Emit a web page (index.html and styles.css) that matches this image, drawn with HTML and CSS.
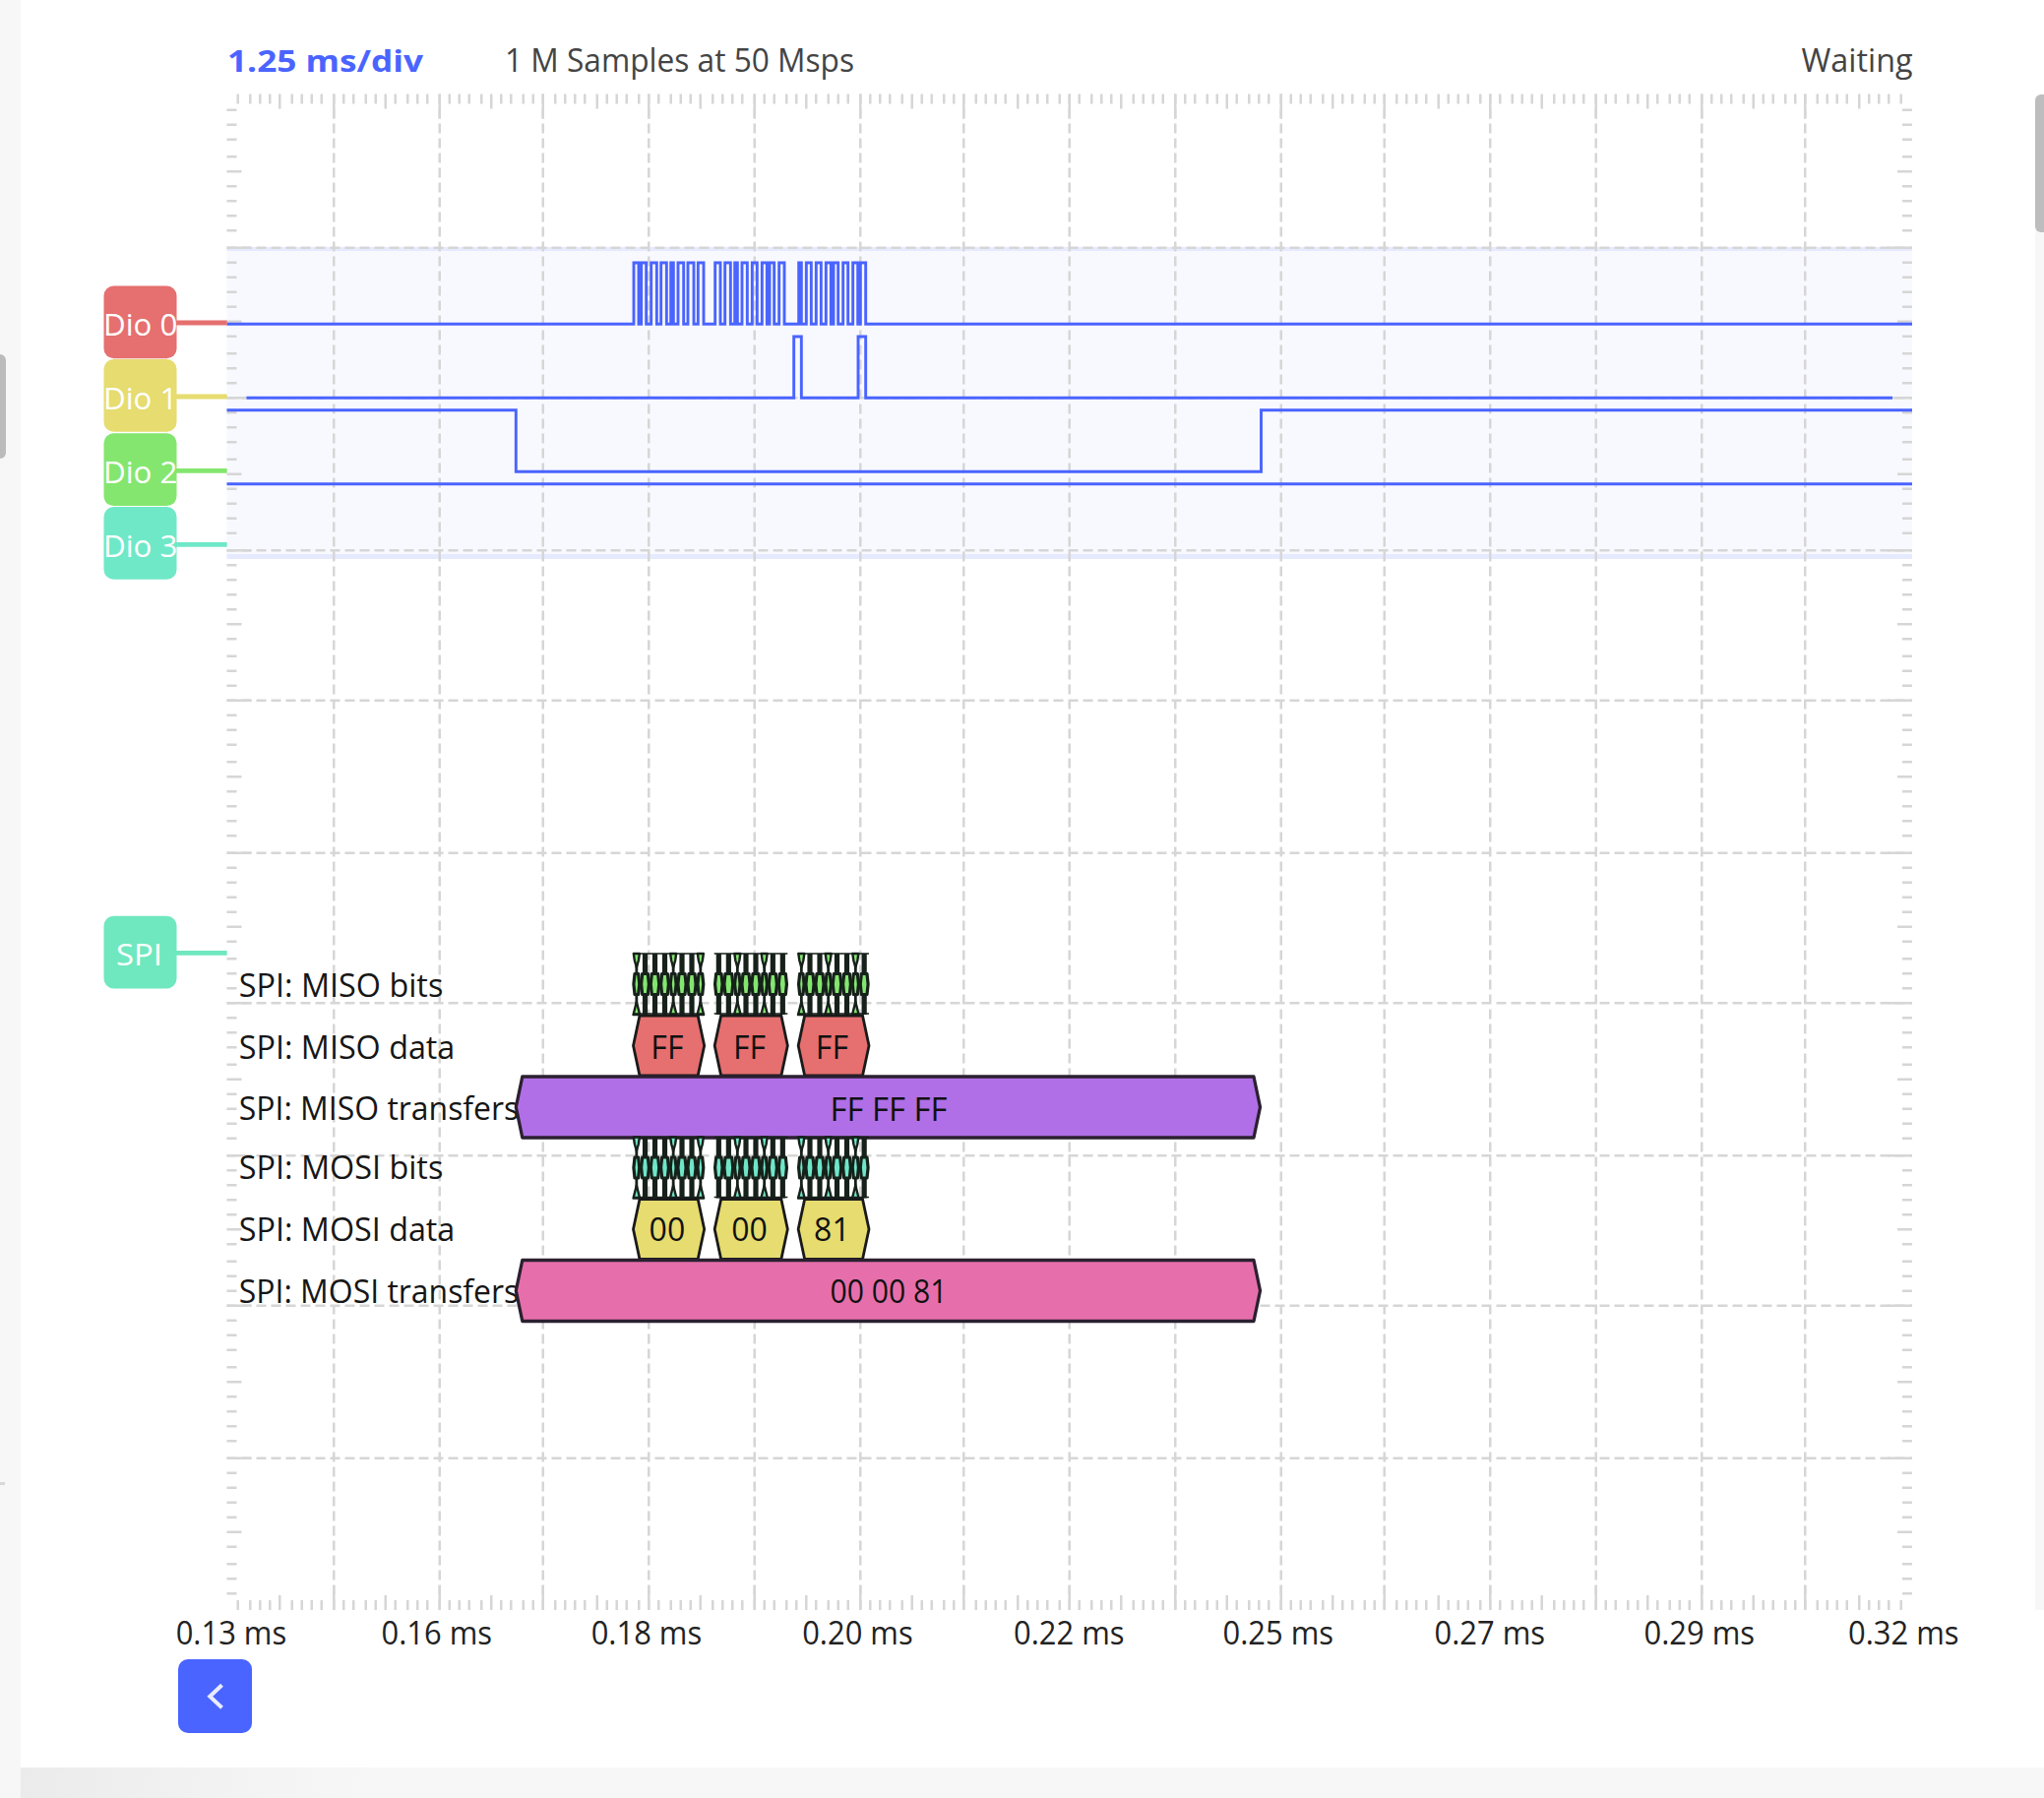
FILE: index.html
```html
<!DOCTYPE html>
<html lang="en">
<head>
<meta charset="utf-8">
<title>Logic Analyzer</title>
<link rel="stylesheet" href="styles.css">
</head>
<body>
<div class="app">
  <aside class="gutter"><div class="gutter-thumb"></div><div class="gutter-mark"></div></aside>
  <main class="panel">
    <svg class="scope" viewBox="21 0 2047 1796" role="img" aria-label="Logic analyzer plot">
      <g class="header">
        <text class="timebase" x="231" y="73" textLength="199" lengthAdjust="spacingAndGlyphs">1.25 ms/div</text>
        <text class="info" x="513" y="73" textLength="355" lengthAdjust="spacingAndGlyphs">1 M Samples at 50 Msps</text>
        <text class="info" x="1830.5" y="73" textLength="113" lengthAdjust="spacingAndGlyphs">Waiting</text>
      </g>
      <g class="band">
        <rect class="band-fill" x="230.5" y="252" width="1712.5" height="314"/>
        <rect class="band-edge" x="230.5" y="251" width="1712.5" height="4"/>
        <rect class="band-edge" x="230.5" y="563" width="1712.5" height="5"/>
      </g>
      <path id="grid-dashes" class="grid dashed"/>
      <path id="grid-ticks" class="grid"/>
      <g id="traces" class="traces"></g>
      <g id="channels"></g>
      <g id="decoder"></g>
      <g id="axis" class="axis"></g>
    </svg>
    <button class="prev" aria-label="Previous"><svg viewBox="0 0 76 76"><path d="M44.8 26.5 32.5 38l12.3 11.5"/></svg></button>
  </main>
  <aside class="scrollbar"><div class="track"><div class="thumb"></div></div></aside>
  <footer class="footer"></footer>
</div>
<script src="scope.js"></script>
</body>
</html>
```
FILE: styles.css
```css
* { box-sizing: border-box; }
body {
  margin: 0;
  background: #fff;
  font-family: "Open Sans", "Noto Sans", sans-serif;
}
.app {
  display: grid;
  grid-template-columns: 21px 1fr 9px;
  grid-template-rows: 1796px 31px;
  width: 2077px;
  height: 1827px;
  overflow: hidden;
}
.gutter {
  grid-row: 1 / 3;
  padding-top: 360px;
  background: #f7f7f7;
}
.gutter-thumb {
  width: 5.5px;
  height: 106px;
  border-radius: 0 6px 6px 0;
  background: #bbb;
}
.gutter-mark {
  width: 5px;
  height: 3px;
  margin-top: 1039.5px;
  background: #d8d8d8;
}
.panel { position: relative; }
.scope {
  display: block;
  width: 2047px;
  height: 1796px;
}
.scope text { font-size: 32px; }
.scope .timebase { font-weight: 700; font-size: 30.5px; fill: #4a64ff; }
.info { fill: #444; }
.band-fill { fill: #f8f9ff; }
.band-edge { fill: #e6eaff; }
.grid { fill: none; stroke: #d6d6d6; stroke-width: 2.5; }
.dashed { stroke-dasharray: 10 5; }
.traces path { fill: none; stroke: #4a64ff; stroke-width: 2.9; }
.link { stroke-width: 4.8; }
.scope .badge-text { fill: #fff; font-size: 31px; }
.cell { stroke: #1a1a1a; stroke-width: 2.8; }
.bit { stroke: #16211a; stroke-width: 3.2; stroke-linejoin: round; }
.notch { stroke: #16211a; stroke-width: 2.4; stroke-linejoin: round; }
.stem { stroke: #16211a; }
.transfer { stroke: #2b2030; stroke-width: 3.3; stroke-linejoin: round; }
.axis text { fill: #222; }
.label { fill: #161616; }
.value { fill: #111; text-anchor: middle; }
.prev {
  position: absolute;
  left: 159.5px;
  top: 1685.5px;
  width: 75.5px;
  height: 75.5px;
  padding: 0;
  border: 0;
  border-radius: 10px;
  background: #4a64ff;
}
.prev svg { display: block; width: 100%; height: 100%; }
.prev path { fill: none; stroke: #e9ecff; stroke-width: 4; }
.scrollbar { padding-top: 95.5px; }
.track { height: 1540.5px; background: #f7f7f7; border-radius: 6px 0 0 0; }
.thumb { height: 140px; border-radius: 6px 0 0 6px; background: #bdbdbf; }
.footer {
  grid-column: 2 / 4;
  background: linear-gradient(90deg, #ebebeb 0, #f3f3f3 220px, #f7f7f7 360px);
}
```
FILE: scope.js
```js
const NS = "http://www.w3.org/2000/svg";
const LEFT = 230.5, RIGHT = 1943, TOP = 95.5, BOTTOM = 1636;

function add(parentId, tag, attrs, text) {
  const el = document.createElementNS(NS, tag);
  for (const k in attrs) el.setAttribute(k, attrs[k]);
  if (text !== undefined) el.textContent = text;
  document.getElementById(parentId).appendChild(el);
  return el;
}

/* Graticule: 16 x 10 divisions with ten ticks in each */
let ticks = "", dashes = "";
for (let n = 1; n < 160; n++) {
  const x = 231.75 + 2.5 * Math.round(4.275 * n + 1e-6);
  const len = n % 10 === 0 ? 25 : n % 5 === 0 ? 15 : 10;
  ticks += `M${x} ${TOP}v${len}M${x} ${BOTTOM}v${-len}`;
  if (n % 10 === 0) dashes += `M${x} ${TOP}V${BOTTOM}`;
}
for (let n = 1; n < 100; n++) {
  const y = 96.75 + 2.5 * Math.round(6.15 * n + 1e-6);
  const len = n % 10 === 0 ? 25 : n % 5 === 0 ? 15 : 10;
  ticks += `M${LEFT} ${y}h${len}M${RIGHT} ${y}h${-len}`;
  if (n % 10 === 0) dashes += `M${LEFT} ${y}H${RIGHT}`;
}
document.getElementById("grid-ticks").setAttribute("d", ticks);
document.getElementById("grid-dashes").setAttribute("d", dashes);

/* Digital traces; pulse edges are in thirds of a pixel from x = 620 */
const px = v => +(620 + v / 3).toFixed(2);
function pulses(x0, x1, low, high, list) {
  let d = `M${x0} ${low}`;
  for (const [a, b] of list) d += `H${px(a)}V${high}H${px(b)}V${low}`;
  return d + `H${x1}`;
}
const clock = [
  [72, 87], [95, 110], [125, 142], [155, 172], [185, 193], [207, 224], [237, 255], [268, 285],
  [320, 336], [350, 367], [380, 388], [402, 418], [433, 448], [463, 478], [486, 500], [515, 531],
  [575, 583], [598, 613], [628, 643], [658, 673], [681, 695], [710, 725], [740, 755], [763, 779]
];
add("traces", "path", { d: pulses(LEFT, RIGHT, 329.3, 267, clock) });
add("traces", "path", { d: pulses(250.5, 1923, 404.3, 342, [[560, 583], [756, 779]]) });
add("traces", "path", { d: `M${LEFT} 416.8H524.3V479.3H1281.5V416.8H${RIGHT}` });
add("traces", "path", { d: `M${LEFT} 491.8H${RIGHT}` });

/* Channel badges */
[
  ["Dio 0", 290.5, 328, 340.7, "#e66f6f"],
  ["Dio 1", 365, 403, 415.7, "#e6dc6f"],
  ["Dio 2", 440.3, 478.3, 490.7, "#84e66f"],
  ["Dio 3", 515, 553.3, 565.7, "#6fe8c8"],
  ["SPI", 930.7, 968.3, 980.5, "#6fe8bf"]
].forEach(([name, y, ly, ty, color]) => {
  const dio = name !== "SPI";
  add("channels", "rect", { x: 105.5, y, width: 74, height: 73.8, rx: 10, fill: color });
  add("channels", "text", {
    class: "badge-text", x: dio ? 105 : 118, y: ty,
    textLength: dio ? 75.5 : 47, lengthAdjust: "spacingAndGlyphs"
  }, name);
  add("channels", "path", { class: "link", d: `M179 ${ly}H230.7`, stroke: color });
});

/* Decoder rows */
function hex(x0, x1, y0, y1, fill, cls) {
  const m = (y0 + y1) / 2, s = 6.5;
  add("decoder", "path", {
    class: cls, fill,
    d: `M${x0} ${m}L${x0 + s} ${y0}L${x1 - s} ${y0}L${x1} ${m}L${x1 - s} ${y1}L${x0 + s} ${y1}Z`
  });
}
/* One-bit cells are narrower than their own slants, so they pinch to a stem above and below */
function bitCell(x0, x1, y, fill) {
  const c = (x0 + x1) / 2, narrow = x1 - x0 < 8.5, bottom = y + 62;
  add("decoder", "path", { class: "stem", d: `M${c} ${y}V${bottom}`, "stroke-width": narrow ? 2.8 : 5.2 });
  if (narrow) {
    add("decoder", "path", {
      class: "notch", fill,
      d: `M${c - 3} ${y}H${c + 3}L${c + 2} ${y + 7}L${c} ${y + 14}L${c - 2} ${y + 7}Z` +
         `M${c - 3.3} ${bottom}H${c + 3.3}L${c} ${bottom - 13}Z`
    });
  }
  const m = y + 31, a = x0 + 0.9, b = x1 - 0.9;
  add("decoder", "path", {
    class: "bit", fill,
    d: `M${a} ${m}L${a + 1.1} ${m - 10.5}H${b - 1.1}L${b} ${m}L${b - 1.1} ${m + 10.5}H${a + 1.1}Z`
  });
}
const bytes = [
  [69, 92, 121, 152, 181, 204, 234, 264, 287],
  [317, 345, 377, 399, 429, 459, 481, 511, 541],
  [572, 594, 624, 654, 676, 707, 736, 760, 789]
];
[
  ["SPI: MISO bits", 1013.4, 207.5], ["SPI: MISO data", 1076.2, 219.5], ["SPI: MISO transfers", 1138.4, 284.5],
  ["SPI: MOSI bits", 1198.4, 207.5], ["SPI: MOSI data", 1261.2, 219.5], ["SPI: MOSI transfers", 1323.6, 284.5]
].forEach(([t, y, w]) => add("decoder", "text", {
  class: "label", x: 242.8, y, textLength: w, lengthAdjust: "spacingAndGlyphs"
}, t));
[
  { top: 969, bit: "#84e66f", data: "#e66f6f", xfer: "#b06fe6", vals: ["FF", "FF", "FF"], dy: 1076.2, ty: 1138.7 },
  { top: 1155.5, bit: "#6fe6c8", data: "#e6dc6f", xfer: "#e66fab", vals: ["00", "00", "81"], dy: 1261, ty: 1323.8 }
].forEach(r => {
  bytes.forEach((b, i) => {
    for (let k = 0; k < 8; k++) bitCell(px(b[k]), px(b[k + 1]), r.top, r.bit);
    add("decoder", "path", {
      class: "stem", "stroke-width": 1.6,
      d: `M${px(b[0])} ${r.top}H${px(b[8])}M${px(b[0])} ${r.top + 61}H${px(b[8])}`
    });
    const x0 = px(b[0]) + 0.5, x1 = px(b[8]);
    hex(x0, x1, r.top + 63, r.top + 124, r.data, "cell");
    add("decoder", "text", { class: "value", x: (x0 + x1) / 2 - 1.7, y: r.dy }, r.vals[i]);
  });
  hex(524.3, 1280.5, r.top + 125, r.top + 187, r.xfer, "transfer");
  add("decoder", "text", {
    class: "value", x: 903, y: r.ty, textLength: 119, lengthAdjust: "spacingAndGlyphs"
  }, r.vals.join(" "));
});

/* Time axis */
[
  ["0.13 ms", 178.7], ["0.16 ms", 387.5], ["0.18 ms", 600.7], ["0.20 ms", 815.2], ["0.22 ms", 1030],
  ["0.25 ms", 1242.5], ["0.27 ms", 1457.5], ["0.29 ms", 1670.5], ["0.32 ms", 1878]
].forEach(([t, x]) => add("axis", "text", {
  x, y: 1670.9, textLength: 112.5, lengthAdjust: "spacingAndGlyphs"
}, t));
```
